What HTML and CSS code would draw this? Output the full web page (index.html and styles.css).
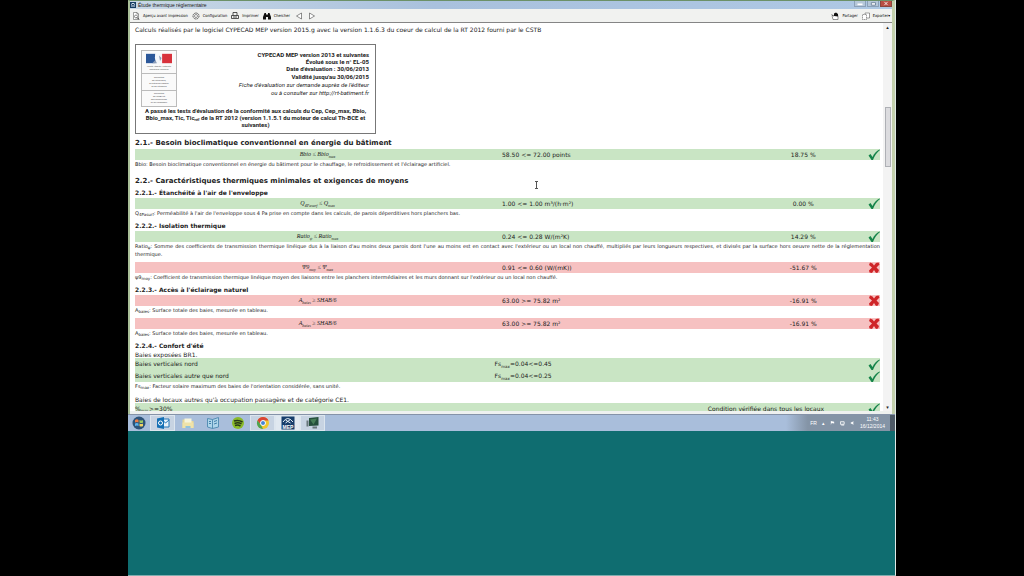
FILE: index.html
```html
<!DOCTYPE html>
<html lang="fr">
<head>
<meta charset="utf-8">
<title>Étude thermique réglementaire</title>
<link rel="stylesheet" href="styles.css">
</head>
<body>
<svg class="defs" aria-hidden="true">
  <symbol id="ok" viewBox="0 0 24 22"><path d="M1 13l4-3 4 6C12 9 17 4 23 1l1 1C18 7 13 13 10 22H7z" fill="#16844a"/></symbol>
  <symbol id="ko" viewBox="0 0 24 22"><path d="M4 1l5 2 3 4 4-5 5-1 2 4-6 6 5 5-2 5-4 1-4-6-4 6-5-1-1-4 6-6-6-5z" fill="#cf2528"/></symbol>
</svg>
<main class="stage">
  <section class="window">
    <header class="titlebar">
      <svg class="app-icon" viewBox="0 0 12 12"><rect width="12" height="12" fill="#173d63"/><path d="M2 5q4-5 8 0M2 8h8" stroke="#dce9f5" stroke-width="2" fill="none"/></svg>
      <h1 class="title">Étude thermique réglementaire</h1>
      <div class="win-buttons">
        <button class="win" aria-label="Réduire"><svg viewBox="0 0 12 6"><path d="M3 4h6" stroke="#fff" stroke-width="2"/></svg></button>
        <button class="win" aria-label="Restaurer"><svg viewBox="0 0 12 6"><path d="M4 2h5v3H4z" stroke="#667c94" fill="#fff"/></svg></button>
        <button class="win win-close" aria-label="Fermer"><svg viewBox="0 0 12 6"><path d="M4 1l4 4M8 1L4 5" stroke="#fff" stroke-width="1"/></svg></button>
      </div>
    </header>
    <nav class="toolbar">
      <button class="tool"><svg viewBox="0 0 16 16"><path d="M3 1h7l3 3v11H3zM10 1v3h3" fill="#fff" stroke="#444"/><circle cx="8" cy="9" r="3" fill="none" stroke="#222"/><path d="M10 11l4 4" stroke="#222" stroke-width="2"/></svg>Aperçu avant impression</button>
      <button class="tool"><svg viewBox="0 0 16 16"><circle cx="8" cy="8" r="6" fill="none" stroke="#555" stroke-width="2" stroke-dasharray="3 1"/><circle cx="8" cy="8" r="3" fill="#fff" stroke="#333"/></svg>Configuration</button>
      <button class="tool"><svg viewBox="0 0 16 16"><path d="M4 7V1h8v6M1 7h14v6H1zM4 10h8" fill="none" stroke="#222" stroke-width="1.5"/></svg>Imprimer</button>
      <button class="tool"><svg viewBox="0 0 16 16"><path d="M3 2h3v3h4V2h3l3 8v5h-6v-5H6v5H0v-5z" fill="#111"/></svg>Chercher</button>
      <button class="tool tool-arrow" aria-label="Précédent"><svg viewBox="0 0 16 16"><path d="M13 2v12L3 8z" fill="#fff" stroke="#222"/></svg></button>
      <button class="tool tool-arrow" aria-label="Suivant"><svg viewBox="0 0 16 16"><path d="M3 2v12l10-6z" fill="#fff" stroke="#222"/></svg></button>
      <span class="spacer"></span>
      <button class="tool"><svg viewBox="0 0 16 16"><path d="M2 7h12v8H4zM1 4l4 5" fill="#fff" stroke="#333"/><path d="M6 8V3l4-2 4 3v5z" fill="#111"/></svg>Partager</button>
      <button class="tool"><svg viewBox="0 0 16 16"><path d="M6 2h9v10H6z" fill="#fff" stroke="#444"/><path d="M1 5h8v10H1z" fill="#fff" stroke="#444" stroke-dasharray="3 1"/></svg>Exporter▾</button>
    </nav>
    <div class="viewport">
      <article class="report">
        <p class="text intro">Calculs réalisés par le logiciel CYPECAD MEP version 2015.g avec la version 1.1.6.3 du coeur de calcul de la RT 2012 fourni par le CSTB</p>
        <section class="cert">
          <div class="cert-top">
            <div class="logo">
              <div class="logo-part">
                <svg class="flag" viewBox="0 0 50 20"><rect width="18" height="18" y="1" fill="#2b5799"/><path d="M18 1h14v18H14l5-5-2-5z" fill="#f4f6fa"/><rect x="31" y="1" width="19" height="18" fill="#d8323c"/><path d="M12 19l6-6 3 6zM25 4l5 5-3 6z" fill="#8b9db9"/></svg>
                <span>Liberté • Égalité • Fraternité</span><span>République Française</span>
              </div>
              <div class="logo-part"><span>MINISTÈRE</span><span>DE L'ÉCOLOGIE,</span><span>DU DÉVELOPPEMENT</span><span>ET DE L'ÉNERGIE</span></div>
              <div class="logo-part"><span>MINISTÈRE</span><span>DE L'ÉGALITÉ</span><span>DES TERRITOIRES</span><span>ET DU LOGEMENT</span></div>
            </div>
            <div class="cert-info">
              <p><strong>CYPECAD MEP version 2013 et suivantes</strong></p>
              <p><strong>Évolué sous le n° EL-05</strong></p>
              <p class="airy"><strong>Date d'évaluation : 30/06/2013</strong></p>
              <p class="airy"><strong>Validité jusqu'au 30/06/2015</strong></p>
              <p class="airy"><em>Fiche d'évaluation sur demande auprès de l'éditeur</em></p>
              <p class="airy"><em>ou à consulter sur http://rt-batiment.fr</em></p>
            </div>
          </div>
          <p class="cert-note">A passé les tests d'évaluation de la conformité aux calculs du Cep, Cep_max, Bbio, Bbio_max, Tic, Tic<sub>réf</sub> de la RT 2012 (version 1.1.5.1 du moteur de calcul Th-BCE et suivantes)</p>
        </section>

        <h2>2.1.- Besoin bioclimatique conventionnel en énergie du bâtiment</h2>
        <table class="bar ok"><tr><td class="formula">Bbio ≤ Bbio<sub>max</sub></td><td class="value">58.50 &lt;= 72.00 points</td><td class="pct">18.75 %</td><td class="mark"><svg><use href="#ok"/></svg></td></tr></table>
        <p class="note">Bbio: Besoin bioclimatique conventionnel en énergie du bâtiment pour le chauffage, le refroidissement et l'éclairage artificiel.</p>

        <h2 class="second">2.2.- Caractéristiques thermiques minimales et exigences de moyens</h2>
        <h3>2.2.1.- Étanchéité à l'air de l'enveloppe</h3>
        <table class="bar ok"><tr><td class="formula">Q<sub>4Pasurf</sub> ≤ Q<sub>max</sub></td><td class="value">1.00 &lt;= 1.00 m³/(h·m²)</td><td class="pct">0.00 %</td><td class="mark"><svg><use href="#ok"/></svg></td></tr></table>
        <p class="note">Q<sub>4Pasurf</sub>: Perméabilité à l'air de l'enveloppe sous 4 Pa prise en compte dans les calculs, de parois déperditives hors planchers bas.</p>

        <h3 class="next">2.2.2.- Isolation thermique</h3>
        <table class="bar ok"><tr><td class="formula">Ratio<sub>ψ</sub> ≤ Ratio<sub>max</sub></td><td class="value">0.24 &lt;= 0.28 W/(m²K)</td><td class="pct">14.29 %</td><td class="mark"><svg><use href="#ok"/></svg></td></tr></table>
        <p class="note justified">Ratio<sub>ψ</sub>: Somme des coefficients de transmission thermique linéique dus à la liaison d'au moins deux parois dont l'une au moins est en contact avec l'extérieur ou un local non chauffé, multipliés par leurs longueurs respectives, et divisés par la surface hors oeuvre nette de la réglementation thermique.</p>
        <table class="bar ko gap"><tr><td class="formula">Ψ9<sub>moy</sub> ≤ Ψ<sub>max</sub></td><td class="value">0.91 &lt;= 0.60 (W/(mK))</td><td class="pct">-51.67 %</td><td class="mark"><svg><use href="#ko"/></svg></td></tr></table>
        <p class="note">ψ9<sub>moy</sub>: Coefficient de transmission thermique linéique moyen des liaisons entre les planchers intermédiaires et les murs donnant sur l'extérieur ou un local non chauffé.</p>

        <h3 class="next">2.2.3.- Accès à l'éclairage naturel</h3>
        <table class="bar ko"><tr><td class="formula">A<sub>baies</sub> ≥ SHAB/6</td><td class="value">63.00 &gt;= 75.82 m²</td><td class="pct">-16.91 %</td><td class="mark"><svg><use href="#ko"/></svg></td></tr></table>
        <p class="note">A<sub>baies</sub>: Surface totale des baies, mesurée en tableau.</p>
        <table class="bar ko gap"><tr><td class="formula">A<sub>baies</sub> ≥ SHAB/6</td><td class="value">63.00 &gt;= 75.82 m²</td><td class="pct">-16.91 %</td><td class="mark"><svg><use href="#ko"/></svg></td></tr></table>
        <p class="note">A<sub>baies</sub>: Surface totale des baies, mesurée en tableau.</p>

        <h3 class="next">2.2.4.- Confort d'été</h3>
        <p class="text">Baies exposées BR1.</p>
        <table class="bar ok double">
          <tr><td class="name">Baies verticales nord</td><td class="value">Fs<sub>max</sub>=0.04&lt;=0.45</td><td class="pct"></td><td class="mark"><svg><use href="#ok"/></svg></td></tr>
          <tr><td class="name">Baies verticales autre que nord</td><td class="value">Fs<sub>max</sub>=0.04&lt;=0.25</td><td class="pct"></td><td class="mark"><svg><use href="#ok"/></svg></td></tr>
        </table>
        <p class="note">Fs<sub>max</sub>: Facteur solaire maximum des baies de l'orientation considérée, sans unité.</p>
        <p class="text local">Baies de locaux autres qu'à occupation passagère et de catégorie CE1.</p>
        <table class="bar ok last"><tr><td class="name">%<sub>ouv.</sub>&gt;=30%</td><td class="cond">Condition vérifiée dans tous les locaux</td><td class="mark"><svg><use href="#ok"/></svg></td></tr></table>
      </article>
      <div class="scrollbar"><span>▴</span><i class="thumb"></i><span>▾</span></div>
      <svg class="caret" viewBox="0 0 5 8"><path d="M1 .5h3M2.500 1v6M1 7.500h3" stroke="#555" fill="none"/></svg>
    </div>
  </section>
  <footer class="taskbar">
    <button class="task start" aria-label="Démarrer"><svg viewBox="0 0 28 28"><circle cx="14" cy="14" r="13" fill="#2d5379"/><path d="M6 8q4-3 7 0v5q-3-2-7 0z" fill="#ed7d45"/><path d="M15 8q4 2 7 0v5q-3 2-7 0z" fill="#9bcb63"/><path d="M6 15q4-2 7 0v5q-3-2-7 0z" fill="#5ab3ec"/><path d="M15 15q4 2 7 0v5q-3 2-7 0z" fill="#f5d363"/></svg></button>
    <button class="task active" aria-label="Outlook"><svg viewBox="0 0 28 28"><path d="M12 6h14v16H12z" fill="#e9f3fb" stroke="#2377b8" stroke-width="2"/><path d="M13 8l6 6 7-6" stroke="#2377b8" stroke-width="2" fill="none"/><path d="M2 5l14-3v24L2 23z" fill="#1470b5"/><circle cx="9" cy="14" r="4" fill="none" stroke="#fff" stroke-width="2"/></svg></button>
    <button class="task" aria-label="Explorateur"><svg viewBox="0 0 28 28"><path d="M3 7h9l2 3h11v14H3z" fill="#e8d795"/><path d="M7 5h14v12H7z" fill="#f6f5dc"/><path d="M3 13h22v11H3z" fill="#f0e3a8"/><path d="M9 20h10v4H9z" fill="#91c3dc"/></svg></button>
    <button class="task" aria-label="Bibliothèque"><svg viewBox="0 0 28 28"><path d="M3 5l10 2v18L3 22zM25 3L13 7v18l12-3z" fill="#aed5ea" stroke="#568fb5" stroke-width="2"/><path d="M6 11h4M6 15h4M16 11l6-2M16 16l6-2" stroke="#4180aa" stroke-width="2"/></svg></button>
    <button class="task" aria-label="Spotify"><svg viewBox="0 0 28 28"><circle cx="14" cy="14" r="12" fill="#8abb2a"/><path d="M6 10q9-3 17 2M7 15q8-3 14 1M8 19q6-2 11 1" stroke="#273719" stroke-width="3" fill="none"/></svg></button>
    <button class="task active" aria-label="Chrome"><svg viewBox="0 0 28 28"><circle cx="14" cy="14" r="12" fill="#f1c72e"/><path d="M3 9a12 12 0 0 1 22 0H14l-5 8z" fill="#d94437"/><path d="M3 9l7 9 4 8A12 12 0 0 1 3 9z" fill="#4ca454"/><circle cx="14" cy="14" r="5" fill="#4585d6" stroke="#fff" stroke-width="2"/></svg></button>
    <button class="task active bright" aria-label="CYPECAD MEP"><svg viewBox="0 0 28 28"><rect x="1" y="1" width="26" height="26" fill="#173d6b"/><path d="M4 12q9-14 20 0M9 8l10 6M19 7L9 14" stroke="#e7f0f6" stroke-width="2" fill="none"/><text x="14" y="25" text-anchor="middle" class="mep">MEP</text></svg></button>
    <button class="task active" aria-label="Moniteur"><svg viewBox="0 0 28 28"><path d="M6 4l19-2v17L6 20z" fill="#254f3c"/><path d="M8 7l14-2-7 12z" fill="#477e58"/><path d="M1 9h4v12H1zM13 21h9v4h-9z" fill="#68777b"/></svg></button>
    <div class="tray">
      <span class="lang">FR</span><span>▴</span>
      <svg viewBox="0 0 12 12"><path d="M2 11V1l8 2v4l-6-1" fill="#fff"/></svg>
      <svg viewBox="0 0 12 12"><path d="M1 3h9v6H1zM3 11h7" fill="none" stroke="#fff" stroke-width="2"/></svg>
      <svg viewBox="0 0 12 12"><path d="M2 4h3l3-3v10L5 8H2z" fill="#fff"/></svg>
      <time class="clock"><span>11:43</span><span>16/12/2014</span></time>
      <i class="peek"></i>
    </div>
  </footer>
</main>
</body>
</html>
```
FILE: styles.css
```css
* { box-sizing: border-box; }
body { margin: 0; background: #000; font-family: "DejaVu Sans", Verdana, sans-serif; color: #222; }
h1, h2, h3, p { margin: 0; }
button { border: 0; padding: 0; margin: 0; background: none; font: inherit; color: inherit; display: flex; align-items: center; justify-content: center; }
svg { display: block; }
sub { font-size: 4px; line-height: 0; vertical-align: -2px; }
.defs { position: absolute; width: 0; height: 0; }
.stage { width: 75%; min-height: 100vh; margin: 0 auto; background: #0f6d70; border-right: 1px solid #dfe9e6; border-bottom: 1px solid #7fadae; display: flex; flex-direction: column; }

.window { background: #f1f2f0; border: 1px solid #6c9168; border-width: 1px 3px 0 2px; border-right-color: #c3d0ac; border-left-color: #a9bf98; }
.titlebar { display: flex; align-items: center; height: 8px; gap: 2px; background: linear-gradient(90deg, #c9d8e6, #a9c1dd 40%, #aec8e4); }
.app-icon { width: 6px; height: 6px; }
.title { flex: 1; font: 5px/8px "Liberation Sans", Arial, sans-serif; }
.win-buttons { display: flex; gap: 1px; align-self: flex-start; }
.win { width: 12px; height: 6px; background: #b5c7d9; border: 1px solid #8ba0b7; border-top: 0; }
.win svg { width: 10px; height: 5px; }
.win-close { background: #b94e43; border-color: #8a463e; }
.toolbar { display: flex; align-items: center; gap: 4px; height: 14px; padding: 0 2px; border-bottom: 1px solid #858585; font: 4px/8px "DejaVu Sans Condensed", "DejaVu Sans", sans-serif; color: #000; }
.tool { gap: 3px; }
.tool svg { width: 8px; height: 8px; }
.tool-arrow { width: 9px; }
.spacer { flex: 1; }

.viewport { position: relative; display: flex; height: 391px; border-bottom: 3px solid #eef1ef; background: #fff; overflow: hidden; }
.report { flex: 1; min-width: 0; height: 388px; overflow: hidden; padding: 2px 3px 0 5px; }
.text { font-size: 6px; line-height: 7px; }
.intro { line-height: 10px; margin-bottom: 9px; }
.cert { width: 241px; height: 90px; margin-bottom: 3px; padding: 5px; border: 1px solid #777; font: 6px/7px Roboto, "Liberation Sans", sans-serif; }
.cert-top { display: flex; justify-content: space-between; height: 57px; }
.logo { width: 36px; display: flex; flex-direction: column; border: 1px solid #bbb; background: #fafafa; }
.logo-part { flex: 1; display: flex; flex-direction: column; align-items: center; justify-content: center; border-bottom: 1px solid #bbb; font-size: 2px; line-height: 3px; color: #555; }
.logo-part:first-child { flex: none; height: 23px; }
.logo-part:last-child { border-bottom: 0; }
.flag { width: 26px; height: 11px; margin-bottom: 1px; }
.cert-info { text-align: right; padding-top: 1px; padding-right: 1px; }
.airy { line-height: 8px; }
.cert-note { text-align: center; font-weight: bold; }
.cert-note sub { vertical-align: -1px; }

h2 { font-size: 7px; line-height: 12px; }
h2.second { margin-top: 7px; }
h3 { font-size: 6px; line-height: 11px; }
h3.next { margin-top: 3px; }
.bar { width: 100%; border-collapse: collapse; table-layout: fixed; font-size: 6px; line-height: 11px; }
.bar td { padding: 0; height: 11px; vertical-align: middle; }
.bar.ok { background: #c9e5c4; }
.bar.ko { background: #f6c1c1; }
.bar.gap { margin-top: 4px; }
.formula { width: 49%; text-align: center; font: italic 6px/11px "Liberation Serif", "Times New Roman", serif; }
.bar .value { width: 32%; padding-left: 2px; }
.pct { text-align: center; }
.mark { width: 12px; }
.mark svg { width: 12px; height: 11px; }
.name { width: 48%; }
.double td { height: 12px; line-height: 12px; }
.cond { text-align: center; }
.note { font-size: 5px; line-height: 8px; }
.note sub, .last sub { vertical-align: -1px; }
.justified { text-align: justify; }
.local { margin-top: 6px; }
.last .name { width: 71%; }

.scrollbar { width: 9px; display: flex; flex-direction: column; justify-content: space-between; align-items: center; background: #f3f3f3; font-size: 5px; line-height: 8px; }
.thumb { width: 6px; height: 60px; margin-bottom: 160px; background: #dcdcdf; border: 1px solid #aeb0b5; }
.caret { position: absolute; left: 53%; top: 158px; width: 5px; height: 8px; }

.taskbar { display: flex; height: 17px; background: #a9bedb; border-top: 1px solid #8593a8; }
.task { width: 25px; }
.task.start { width: 22px; }
.task svg { width: 14px; height: 14px; }
.task.active { background: #c7d3e2; border: 1px solid #dce5ee; }
.task.bright { background: #e0e8f0; }
.mep { font: bold 10px "Liberation Sans", sans-serif; fill: #fff; }
.tray { margin-left: auto; display: flex; align-items: center; gap: 5px; padding-left: 24px; color: #fff; font: 5px/7px "Liberation Sans", sans-serif; background: linear-gradient(90deg, #a9bedb, #8494a6 20%); }
.tray svg { width: 5px; height: 6px; }
.clock { display: flex; flex-direction: column; align-items: center; }
.peek { width: 5px; height: 16px; background: #4e5a66; }
```
